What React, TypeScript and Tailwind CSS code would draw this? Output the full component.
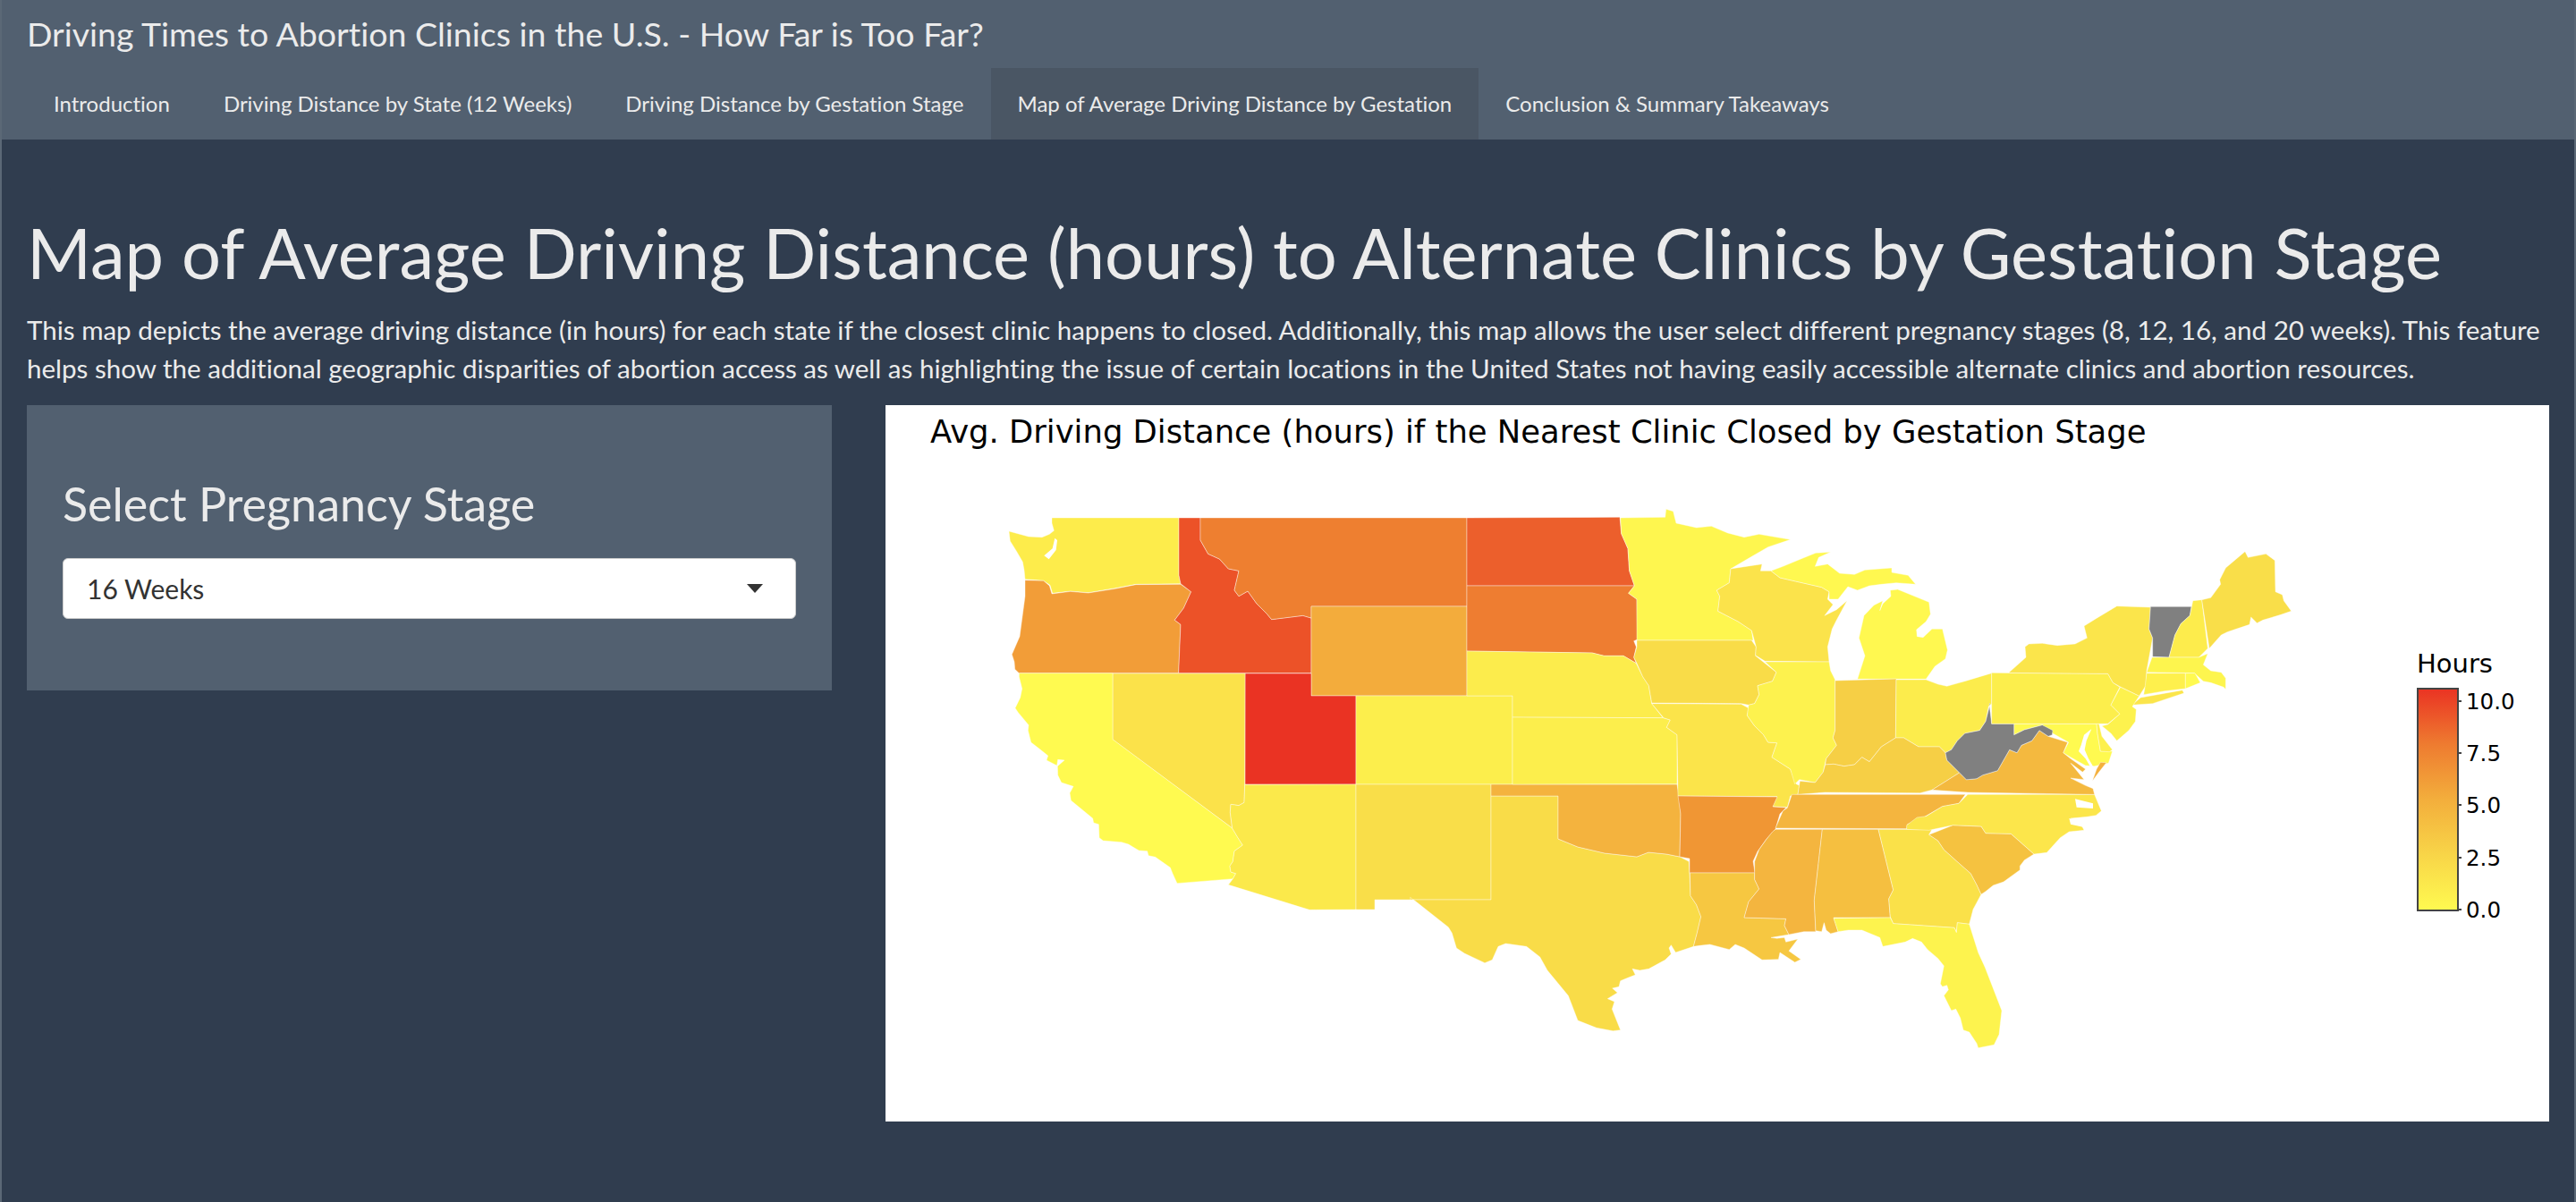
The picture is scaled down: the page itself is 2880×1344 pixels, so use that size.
type Pt = number[];

const crop = (ox: number, oy: number) => (s: string): Pt[] =>
  s.trim().split(/\s+/).map((p) => {
    const [x, y] = p.split(",").map(Number);
    return [ox + x / 3, oy + y / 3];
  });

// point lists were traced per crop of the map, each helper has its own origin
const A = crop(1110, 560);
const B = crop(1110, 780);
const C = crop(1780, 560);
const D = crop(2200, 600);
const E = crop(1900, 900);
const F = crop(1560, 960);
const R = (s: string): Pt[] => crop(0, 0)(s).map(([x, y]) => [x * 3, y * 3]);

const states: { name: string; fill: string; pts: Pt[] }[] = [
  { name: "WA", fill: "#fdec4b", pts: A("198,57 624,57 624,250 630,278 480,280 410,293 320,308 260,303 200,310 192,283 170,268 108,263 105,232 100,205 80,170 58,135 54,102 120,120 165,122 190,112 205,100 198,75") },
  { name: "OR", fill: "#f29d38", pts: A("108,266 170,268 190,285 198,312 260,304 320,309 410,295 480,281 630,280 665,305 640,360 610,400 630,415 623,578 88,578 74,565 72,540 64,515 90,455 108,320") },
  { name: "ID", fill: "#ec5228", pts: A("624,57 696,57 696,132 722,178 760,195 790,228 825,235 810,300 825,320 855,303 885,345 920,380 935,398 1040,385 1068,393 1068,578 623,578 630,415 610,400 640,360 665,305 630,278 624,250") },
  { name: "MT", fill: "#ee7f30", pts: [...A("696,57"), ...R("1640,579 1640,678 1466,678"), ...A("1068,393 1040,385 935,398 920,380 885,345 855,303 825,320 810,300 825,235 790,228 760,195 722,178 696,132")] },
  { name: "WY", fill: "#f3ac3c", pts: R("1466,678 1640,678 1640,778 1466,778") },
  { name: "UT", fill: "#ea3323", pts: R("1392,753 1466,753 1466,778 1516,778 1516,877 1392,877") },
  { name: "NV", fill: "#fbe24a", pts: [...R("1244,753 1392,753"), ...B("845,292 843,352 825,362 798,358 796,385 803,438"), ...R("1244,827")] },
  { name: "CA", fill: "#fffa50", pts: [...A("88,578 402,578 402,800"), ...B("803,438 822,470 838,495 810,515 805,550 795,565 798,585 815,590 805,608 618,623 603,590 595,570 545,535 522,530 518,515 490,513 455,492 432,485 370,480 357,470 355,425 338,420 335,405 262,345 258,320 270,298 230,285 218,260 217,230 240,210 218,208 215,228 180,210 185,195 160,175 128,150 118,110 120,92 85,50 75,35 92,0"), ...A("98,630 88,590")] },
  { name: "AZ", fill: "#fbe94b", pts: [...B("845,292"), ...R("1516,877 1516,1017"), ...B("1062,712 790,628 805,608 815,590 798,585 795,565 805,550 810,515 838,495 822,470 803,438 796,385 798,358 825,362 843,352")] },
  { name: "CO", fill: "#fcee4c", pts: R("1516,778 1691,778 1691,877 1516,877") },
  { name: "NM", fill: "#f9de49", pts: R("1516,877 1667,877 1667,1006 1577,1006 1537,1006 1537,1017 1516,1017") },
  { name: "TX", fill: "#f9dc48", pts: [...R("1667,890 1742,890 1742,938 1764,947 1794,954 1830,958 1843,953 1863,955 1878,958"), ...F("985,10 990,125 1010,155 1025,195 1012,250 1000,295 940,315 925,290 918,300 925,320 905,340 850,370 820,375 795,370 805,390 780,400 755,410 750,430 728,435 745,450 712,470 735,480 727,505 755,575 730,578 675,568 612,543 580,460 510,375 485,330 440,295 370,285 345,295 325,340 300,350 232,318 205,300 190,250 178,230 70,145 50,130"), ...R("1577,1006 1667,1006")] },
  { name: "OK", fill: "#f4b33e", pts: R("1667,877 1875,877 1877,890 1879,910 1878,958 1863,955 1843,953 1830,958 1794,954 1764,947 1742,938 1742,890 1667,890") },
  { name: "ND", fill: "#ec5f2c", pts: [...R("1640,579"), ...C("93,55 98,110 120,160 125,235 142,285"), ...R("1640,655")] },
  { name: "SD", fill: "#ee7d31", pts: [...R("1640,655"), ...C("142,285 122,310 150,330 152,465 140,470 148,490 140,525 148,545 105,520 40,520 0,510"), ...R("1640,728")] },
  { name: "NE", fill: "#fcec4c", pts: [...R("1640,728"), ...C("0,510 40,520 105,520 148,545 170,590 190,620 200,680 238,728"), ...R("1691,802 1691,778 1640,778")] },
  { name: "KS", fill: "#fcee4c", pts: [...R("1691,802"), ...C("238,728 262,735 250,760 285,785 285,950"), ...R("1691,877")] },
  { name: "MN", fill: "#fef64f", pts: C("95,57 245,55 248,28 272,35 282,75 350,90 400,85 455,108 510,122 560,112 665,130 590,155 530,190 465,228 460,275 418,300 428,320 422,370 490,405 535,435 540,468 150,468 150,330 122,310 142,285 125,235 120,160 98,110") },
  { name: "IA", fill: "#f9dc48", pts: C("150,468 535,468 550,490 548,520 618,575 605,605 555,620 560,650 545,680 525,685 500,680 200,678 190,620 170,590 150,545 140,525 150,490") },
  { name: "MO", fill: "#fbe44a", pts: C("200,680 500,682 525,695 520,720 545,755 575,785 590,810 620,812 603,860 665,900 685,950 695,955 690,985 665,990 655,1028 605,1025 620,992 288,990 285,785 250,760 262,735 240,728") },
  { name: "AR", fill: "#f09634", pts: R("1876,890 1987,891 1982,902 1997,903 1990,910 1985,927 1975,938 1965,952 1960,963 1962,976 1889,976 1889,960 1878,958 1879,910") },
  { name: "LA", fill: "#f6c741", pts: [...F("988,48"), ...E("185,228 185,250 200,282 165,325 150,378 290,382 285,405 300,435 240,445 260,448 285,445 290,460 330,450 300,490 340,518 320,528 270,495 265,518 210,520 150,480 120,468 100,485 35,468 0,472"), ...F("1000,295 1012,250 1025,195 1010,155 990,125")] },
  { name: "WI", fill: "#fbe34b", pts: C("465,228 570,212 565,235 600,235 630,258 770,290 795,305 790,330 808,348 780,385 820,365 855,335 820,400 805,430 790,490 795,540 580,538 548,518 550,490 535,435 490,405 422,370 428,320 418,300 460,275") },
  { name: "MI-U", fill: "#fff850", pts: C("600,235 640,220 700,195 750,175 800,172 760,190 748,220 790,212 830,243 880,247 915,232 1005,225 1005,240 1060,250 1085,280 1020,275 970,280 930,285 890,300 858,288 825,330 795,330 795,305 770,290 630,258") },
  { name: "MI-L", fill: "#fff850", pts: C("1025,297 1130,340 1135,380 1120,405 1088,432 1090,455 1110,458 1140,430 1175,430 1192,500 1185,530 1150,555 1120,598 890,598 915,520 895,460 912,385 945,350 975,335 965,368 975,345 1002,320 1000,300") },
  { name: "IL", fill: "#fdf24e", pts: C("580,540 795,540 800,570 815,600 815,770 808,795 820,820 785,865 775,910 748,945 695,935 680,950 665,900 603,860 620,812 590,810 575,785 545,755 520,720 525,685 545,680 560,650 555,620 605,605 618,575") },
  { name: "IN", fill: "#f6cf45", pts: C("815,603 1020,597 1018,795 970,825 930,875 905,860 880,885 845,890 810,883 782,885 785,865 820,820 808,795 815,770") },
  { name: "OH", fill: "#fcec4c", pts: C("1020,600 1120,600 1160,615 1190,622 1250,605 1340,578 1340,680 1330,690 1320,740 1300,770 1250,780 1225,805 1205,835 1185,845 1165,825 1095,825 1045,795 1018,795") },
  { name: "KY", fill: "#f6cf45", pts: C("1018,795 1045,795 1095,825 1165,825 1185,845 1190,870 1232,912 1140,970 1100,980 780,978 690,985 697,940 748,945 775,910 782,885 810,883 845,890 880,885 905,860 930,875 970,825") },
  { name: "TN", fill: "#f4b53f", pts: C("670,985 1252,985 1230,1015 1175,1025 1115,1060 1058,1085 1055,1100 615,1098 640,1040 655,1030") },
  { name: "MS", fill: "#f4b53f", pts: E("255,82 412,82 385,320 390,425 350,425 300,435 285,405 290,382 150,378 165,325 200,282 185,250 185,190 200,150 225,115 245,90") },
  { name: "AL", fill: "#f5bf40", pts: E("412,82 600,82 650,285 635,315 640,378 450,378 465,425 440,432 425,420 418,395 410,425 390,422 385,320") },
  { name: "GA", fill: "#fae149", pts: E("600,82 780,82 770,100 800,120 820,150 870,195 910,230 930,268 945,300 918,350 905,400 865,395 862,425 855,412 650,398 640,375 635,315 650,285") },
  { name: "SC", fill: "#f5c240", pts: E("770,100 850,68 945,72 960,95 1045,97 1122,165 1090,185 1075,205 1075,218 1020,258 985,270 960,290 945,300 930,268 910,230 870,195 820,150 800,120") },
  { name: "FL", fill: "#fdf34e", pts: E("450,380 640,378 650,398 855,412 862,428 865,395 905,400 935,495 958,545 1014,690 1005,770 988,805 935,815 930,800 905,762 885,755 875,715 860,685 845,690 820,640 835,620 830,605 815,610 808,600 820,540 800,515 765,485 745,460 715,448 690,460 615,475 605,445 545,420 500,420 465,425") },
  { name: "NC", fill: "#fce64b", pts: [...D("0,865 425,865 448,920 430,935 400,940 345,945 380,965 390,985 340,990 310,1010 265,1060 222,1065"), ...E("1045,97 960,95 945,72 850,68 770,85 695,82 695,68 730,42 760,38 815,5"), ...C("1230,1015")] },
  { name: "MD", fill: "#fffa50", pts: D("155,628 432,628 435,660 445,720 485,720 472,760 425,770 395,768 345,740 320,725 338,690 285,660 250,632 190,648 155,665") },
  { name: "VA", fill: "#f4b93f", pts: [...C("1232,912 1255,935"), ...D("0,815 30,812 50,800 100,785 140,715 165,725 180,700 215,685 240,650 270,670 335,690 320,725 345,745 395,780 385,790 345,760 390,815 345,810 395,835 420,845 425,865 0,858"), ...C("1140,970")] },
  { name: "VA-E", fill: "#f4b03d", pts: D("418,820 432,780 445,757 465,758 440,790") },
  { name: "WV", fill: "#808080", pts: [...D("72,560 80,628 155,628 155,665 190,648 250,632 285,650 283,665 270,670 240,650 215,685 180,700 165,725 140,715 100,785 50,800 30,812 0,815"), ...C("1255,935 1232,912 1190,870 1185,845 1205,835 1225,805 1250,780 1300,770 1320,740 1335,680")] },
  { name: "DE", fill: "#fdf04d", pts: D("432,628 440,628 450,670 485,715 475,722 445,720 435,660") },
  { name: "PA", fill: "#fcee4c", pts: D("80,457 470,460 487,490 510,505 480,565 510,595 470,628 80,628") },
  { name: "NY", fill: "#fbe54b", pts: D("137,457 195,405 192,370 205,360 250,358 300,365 360,360 400,340 390,300 430,275 500,233 613,237 608,310 620,340 600,450 597,500 575,535 510,503 487,490 470,460") },
  { name: "NY-LI", fill: "#fbe54b", pts: D("550,565 580,540 720,515 725,525 620,560") },
  { name: "NJ", fill: "#fdf24e", pts: D("512,505 575,535 552,570 565,580 562,620 540,650 500,685 480,660 450,635 470,630 510,595 480,565") },
  { name: "VT", fill: "#808080", pts: D("613,235 750,235 745,265 715,292 695,330 675,405 620,403 620,340 608,310") },
  { name: "NH", fill: "#fdec4c", pts: D("755,215 785,212 805,375 775,405 675,405 695,330 715,292 745,265") },
  { name: "ME", fill: "#f9de49", pts: D("785,212 815,205 848,160 845,145 865,105 930,50 940,70 1000,58 1030,80 1032,185 1055,195 1060,215 1085,250 1050,262 990,280 970,290 950,270 945,295 900,310 870,320 850,330 810,375") },
  { name: "MA", fill: "#fdf54e", pts: D("618,405 775,405 805,392 790,430 815,450 850,455 865,475 865,512 858,505 815,490 790,485 760,458 600,455") },
  { name: "CT", fill: "#fef04d", pts: D("600,458 730,458 730,510 660,518 590,530 595,500") },
  { name: "RI", fill: "#fffa50", pts: D("730,458 762,458 780,490 730,510") },
];

// inlets that are cut out of the coast
const cuts: Pt[][] = [
  A("172,184 200,160 208,125 216,132 212,165 188,196"),
  D("415,645 390,665 380,700 372,720 395,745 410,770 420,770 405,745 392,715 398,685"),
  D("400,770 418,770 418,820 395,790"),
  D("360,880 420,895 420,912 365,908"),
  D("340,945 380,955 390,975 345,965"),
];

const toPoints = (pts: Pt[]) => pts.map((p) => p.join(",")).join(" ");

const tabs = [
  "Introduction",
  "Driving Distance by State (12 Weeks)",
  "Driving Distance by Gestation Stage",
  "Map of Average Driving Distance by Gestation",
  "Conclusion & Summary Takeaways",
];

const ticks = [
  { label: "10.0", y: 784 },
  { label: "7.5", y: 842 },
  { label: "5.0", y: 900 },
  { label: "2.5", y: 959 },
  { label: "0.0", y: 1017 },
];

const MapPlot = () => (
  <svg viewBox="990 453 1860 801" className="h-full w-full">
    <defs>
      <linearGradient id="hours" x1="0" y1="1" x2="0" y2="0">
        <stop offset="0" stopColor="#fffa50" />
        <stop offset="0.25" stopColor="#f8d548" />
        <stop offset="0.5" stopColor="#f3ae3c" />
        <stop offset="0.75" stopColor="#ee7b30" />
        <stop offset="1" stopColor="#ea3323" />
      </linearGradient>
    </defs>
    <text x="1040" y="495" fontFamily="DejaVu Sans, sans-serif" fontSize="35.4" fill="#000">
      Avg. Driving Distance (hours) if the Nearest Clinic Closed by Gestation Stage
    </text>
    {states.map((s) => (
      <polygon key={s.name} points={toPoints(s.pts)} fill={s.fill} stroke="#ffffff" strokeWidth="0.4" />
    ))}
    {cuts.map((c, i) => (
      <polygon key={i} points={toPoints(c)} fill="#ffffff" />
    ))}
    {/* colorbar */}
    <text x="2702" y="752" fontFamily="DejaVu Sans, sans-serif" fontSize="29" fill="#000">
      Hours
    </text>
    <rect x="2703" y="770" width="45" height="248" fill="url(#hours)" stroke="#444444" strokeWidth="2" />
    {ticks.map((t) => (
      <g key={t.label}>
        <line x1="2748" x2="2752" y1={t.y} y2={t.y} stroke="#444444" strokeWidth="2" />
        <text x="2757" y={t.y + 9} fontFamily="DejaVu Sans, sans-serif" fontSize="24.5" fill="#000">
          {t.label}
        </text>
      </g>
    ))}
  </svg>
);

export default function App() {
  return (
    <div className="h-[1344px] overflow-hidden border-x-2 border-[#5b6876] bg-[#303d4f] font-[Lato,sans-serif] text-[#ebebeb] [font-variant-ligatures:none]">
      {/* Navbar */}
      <div className="bg-[#526070]">
        <div className="flex h-[76px] items-center px-[28px] text-[37.5px] leading-none">
          Driving Times to Abortion Clinics in the U.S. - How Far is Too Far?
        </div>
        <div className="flex h-[80px] px-[28px] text-[24px]">
          {tabs.map((tab, i) => (
            <div key={tab} className={`flex items-center px-[30px] ${i === 3 ? "bg-[#4a5664]" : ""}`}>
              {tab}
            </div>
          ))}
        </div>
      </div>

      <div className="px-[28px]">
        <h1 className="mt-[81px] text-[77.7px] leading-[90px]">
          Map of Average Driving Distance (hours) to Alternate Clinics by Gestation Stage
        </h1>
        <p className="mt-[20px] text-[29.55px] leading-[43px]">
          This map depicts the average driving distance (in hours) for each state if the closest clinic happens to closed. Additionally, this map allows the user select different pregnancy stages (8, 12, 16, and 20 weeks). This feature helps show the additional geographic disparities of abortion access as well as highlighting the issue of certain locations in the United States not having easily accessible alternate clinics and abortion resources.
        </p>

        <div className="mt-[20px] flex gap-[60px]">
          <div className="h-[319px] w-[900px] bg-[#526070] px-[40px] pt-[74px]">
            <h3 className="text-[52px] leading-[72px]">Select Pregnancy Stage</h3>
            <div className="mt-[25px] flex h-[68px] items-center justify-between rounded-[6px] border border-[#cccccc] bg-white pl-[26px] pr-[36px] text-[30px] text-[#333333]">
              <span>16 Weeks</span>
              <span className="h-0 w-0 border-x-[9px] border-t-[10px] border-x-transparent border-t-[#333333]" />
            </div>
          </div>
          <div className="h-[801px] w-[1860px] bg-white">
            <MapPlot />
          </div>
        </div>
      </div>
    </div>
  );
}
